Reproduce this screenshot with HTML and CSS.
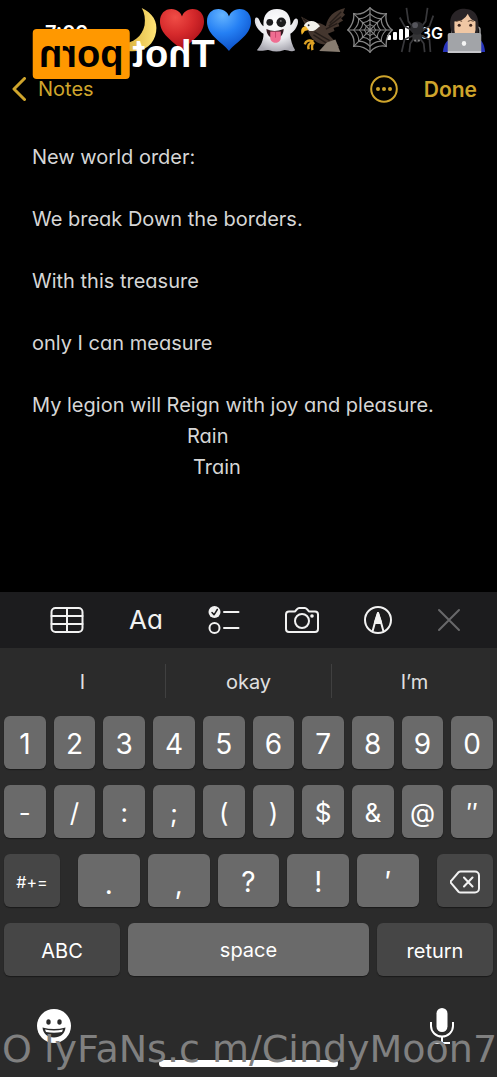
FILE: index.html
```html
<!DOCTYPE html>
<html lang="en">
<head>
<meta charset="utf-8">
<meta name="viewport" content="width=device-width, initial-scale=1">
<title>Notes</title>
<link rel="stylesheet" href="styles.css">
</head>
<body>
<div class="screen">
  <header class="status">
    <span class="time">7:09</span>
    <span class="status-right">
      <svg class="signal" viewBox="0 0 22 14" aria-hidden="true"><rect y="9" width="4" height="5" rx="1"/><rect x="6" y="6" width="4" height="8" rx="1"/><rect x="12" y="3" width="4" height="11" rx="1"/><rect x="18" width="4" height="14" rx="1"/></svg>
      <span class="network">3G</span>
      <svg class="battery" viewBox="0 0 32 14" aria-hidden="true"><rect x="1" y="1" width="28" height="12" rx="3" fill="none" stroke="#999" stroke-width="1.5"/><rect x="3" y="3" width="12" height="8" rx="1" fill="#fff"/></svg>
    </span>
  </header>

  <nav class="nav">
    <a class="back" href="#"><svg class="chevron" viewBox="0 0 14 24" aria-hidden="true"><path d="M12.500 1.500 2 12l10.500 10.500"/></svg>Notes</a>
    <button class="more" type="button" aria-label="More"><svg viewBox="0 0 28 28" aria-hidden="true"><circle cx="14" cy="14" r="12.800" fill="none" stroke="currentColor" stroke-width="2"/><g fill="currentColor"><circle cx="8" cy="14" r="2"/><circle cx="14" cy="14" r="2"/><circle cx="20" cy="14" r="2"/></g></svg></button>
    <button class="done" type="button">Done</button>
  </nav>

  <main class="note">
    <p>New world order:</p>
    <p>We break Down the borders.</p>
    <p>With this treasure</p>
    <p>only I can measure</p>
    <p>My legion will Reign with joy and pleasure.</p>
    <p class="rain">Rain</p>
    <p class="train">Train</p>
  </main>

  <section class="keyboard" aria-label="Keyboard">
    <div class="toolbar">
      <button type="button" aria-label="Table"><svg width="34" height="28" viewBox="0 0 34 28"><rect x="1.500" y="2" width="31" height="24" rx="4"/><path d="M1.500 10h31M1.500 18h31M17 2v24"/></svg></button>
      <button type="button" class="format">Aa</button>
      <button type="button" aria-label="Checklist"><svg width="32" height="28" viewBox="0 0 32 28"><circle cx="6.500" cy="6" r="6" fill="#f2f2f2" stroke="none"/><path d="m4 6.500 2 2.300L9.300 3.500" stroke="#1c1c1e" stroke-width="1.500"/><circle cx="6.500" cy="22" r="5"/><path d="M16 6h14.500M16 22h14.500"/></svg></button>
      <button type="button" aria-label="Camera"><svg width="34" height="28" viewBox="0 0 34 28"><path d="M4 5.500h5.500c1.500 0 2-3.500 4.500-3.500h6c2.500 0 3 3.500 4.500 3.500H30a3 3 0 0 1 3 3V23a3 3 0 0 1-3 3H4a3 3 0 0 1-3-3V8.500a3 3 0 0 1 3-3Z"/><circle cx="17" cy="15" r="7"/><circle cx="27" cy="10" r="1.800" fill="#f2f2f2" stroke="none"/></svg></button>
      <button type="button" aria-label="Markup"><svg width="28" height="28" viewBox="1 0 28 28"><circle cx="15" cy="14" r="13"/><path d="m9.500 25.500 3-11L15 7l2.500 7.500 3 11M12.500 17h5"/><path d="m15 7-2.800 9h5.600Z" fill="#f2f2f2"/></svg></button>
      <button type="button" class="close" aria-label="Close"><svg width="24" height="28" viewBox="0 0 24 28"><path d="m2 4 20 20M22 4 2 24"/></svg></button>
    </div>

    <div class="suggestions">
      <button type="button">I</button><button type="button">okay</button><button type="button">I’m</button>
    </div>

    <div class="keys">
      <div class="row">
        <button type="button">1</button><button type="button">2</button><button type="button">3</button><button type="button">4</button><button type="button">5</button><button type="button">6</button><button type="button">7</button><button type="button">8</button><button type="button">9</button><button type="button">0</button>
      </div>
      <div class="row symbols">
        <button type="button">-</button><button type="button">/</button><button type="button">:</button><button type="button">;</button><button type="button">(</button><button type="button">)</button><button type="button">$</button><button type="button">&amp;</button><button type="button">@</button><button type="button">″</button>
      </div>
      <div class="row punctuation">
        <button type="button" class="dark shift">#+=</button>
        <div class="row middle"><button type="button" class="low">.</button><button type="button" class="low">,</button><button type="button">?</button><button type="button">!</button><button type="button">′</button></div>
        <button type="button" class="dark shift" aria-label="Delete"><svg width="30" height="24" viewBox="0 0 30 24"><path d="M10.500 1.500H25a4 4 0 0 1 4 4v13a4 4 0 0 1-4 4H10.500a3 3 0 0 1-2-.8L1.200 13.200a1.600 1.600 0 0 1 0-2.400l7.300-8.500a3 3 0 0 1 2-.8ZM14 7.500l8.500 9M22.500 7.500l-8.500 9"/></svg></button>
      </div>
      <div class="row bottom">
        <button type="button" class="dark word">ABC</button><button type="button" class="space">space</button><button type="button" class="dark word">return</button>
      </div>
    </div>

    <div class="footer">
      <button type="button" aria-label="Emoji"><svg width="34" height="36" viewBox="0 0 34 36"><circle cx="17" cy="18" r="17" fill="#fff"/><g fill="#2b2b2b"><ellipse cx="11.500" cy="14" rx="2.200" ry="2.800"/><ellipse cx="22.500" cy="14" rx="2.200" ry="2.800"/><path d="M5.500 19.500q11.500 3 23 0c-.5 6.500-5.500 10-11.500 10s-11-3.500-11.500-10Z"/></g><path d="M8 21.500q9 2 18 0l-1 2.500q-8 1.500-16 0Z" fill="#fff"/></svg></button>
      <button type="button" aria-label="Dictate"><svg width="26" height="36" viewBox="0 0 26 36"><rect x="7.500" y="0" width="11" height="24" rx="5.500" fill="#fff"/><path d="M2 14v4a11 10.500 0 0 0 22 0v-4M13 28.500V35M5 35h16" fill="none" stroke="#fff" stroke-width="2"/></svg></button>
    </div>
    <div class="home"></div>
  </section>

  <div class="emoji-strip" aria-hidden="true">
    <svg viewBox="0 0 48 48"><defs><linearGradient id="moon" x1="0" x2="1"><stop offset="0" stop-color="#c99a22"/><stop offset="1" stop-color="#ffe477"/></linearGradient></defs><path d="M31 1c11 5 17 14 15 25-2 14-14 22-29 20C9 45 4 42 1 37c17 4 30-4 33-18 1-7 0-13-3-18Z" fill="url(#moon)"/></svg>
    <svg viewBox="0 0 48 48"><defs><radialGradient id="red" cx=".35" cy=".2" r=".8"><stop offset="0" stop-color="#f04d46"/><stop offset=".5" stop-color="#d62a2c"/><stop offset="1" stop-color="#a90f18"/></radialGradient></defs><path d="M24 46C19 38 1 30 1 15 1 7 6 2 13 2c6 0 10 4 11 8 1-4 5-8 11-8 7 0 12 5 12 13 0 15-18 23-23 31Z" fill="url(#red)"/></svg>
    <svg viewBox="0 0 48 48"><defs><radialGradient id="blue" cx=".35" cy=".15" r=".85"><stop offset="0" stop-color="#64b4ff"/><stop offset=".5" stop-color="#2580f4"/><stop offset="1" stop-color="#0b50c9"/></radialGradient></defs><path d="M24 46C19 38 1 30 1 15 1 7 6 2 13 2c6 0 10 4 11 8 1-4 5-8 11-8 7 0 12 5 12 13 0 15-18 23-23 31Z" fill="url(#blue)"/></svg>
    <svg viewBox="0 0 48 48"><defs><radialGradient id="ghost" cx=".5" cy=".3" r=".7"><stop offset="0" stop-color="#fff"/><stop offset=".6" stop-color="#ebebef"/><stop offset="1" stop-color="#aaa9b2"/></radialGradient></defs><path d="M11 20C10 9 15 2 25 2s15 7 14 17c3-1 3-7 6-7 4 0 2 11-6 16 0 7 2 12 5 17-5 3-8-1-12 0-5 2-10 2-15 0-4-1-7 2-13 0 4-4 7-10 7-17-8-5-11-14-8-17 4-1 4 7 8 9Z" fill="url(#ghost)"/><circle cx="17.500" cy="16" r="3.500" fill="#1c1c1e"/><circle cx="29.500" cy="16" r="5" fill="#1c1c1e"/><circle cx="29" cy="14.500" r="1" fill="#777"/><path d="M14 23q8 4 18 0c0 6-4 10-9 10s-9-4-9-10Z" fill="#33191f"/><path d="M18 25.500h11V32c0 7-11 7-11 0Z" fill="#ef6d91"/><path d="M23.500 26v6" stroke="#cf456e"/></svg>
    <svg viewBox="0 0 48 48"><path d="M1 10l6 3 8 5c4-3 8 0 12 2 2-10 8-16 20-19l-2 5 2 2-4 4 2 2-5 3 1 3-6 2 1 3-7 3c5 5 9 9 12 14l-12-3C19 40 11 34 8 24Z" fill="#44362e"/><path d="m31 17 12-12M30 20 43 10M27 23l12-6M15 26l16 9M14 29l14 9M3 12l9 7" stroke="#251d19" stroke-width="1.500"/><path d="M4 19c4-6 12-6 17 1-3 1-4 6-11 5l-4-3Z" fill="#f2f1eb"/><path d="M6 20c-4 0-6 4-4 9l3-4 4-1Z" fill="#f3b52a"/><circle cx="9" cy="19" r="1" fill="#222"/><path d="M14 36c-5-2-8-1-9 3M13 37c-4 1-5 3-4 7M15 37c-2 1-3 4-2 8" fill="none" stroke="#dda124" stroke-width="2.500"/><path d="m28 37 9-3 5 13-22-1Z" fill="#877c70"/></svg>
    <svg viewBox="0 0 48 48" fill="none" stroke="#858585"><path stroke-width="1.200" d="M24 0v48M0 24h48M7 7l34 34M41 7 7 41"/><path stroke-width="1.400" d="M24 1Q16 9 7 7 8 16 1 24q8 7 6 17 10-1 17 6 7-8 17-6-1-10 6-17-8-7-6-17-9 1-17-6Z"/><path stroke-width="1.100" d="M24 7q-6 6-12 5 1 6-5 12 6 6 5 12 6-1 12 5 6-6 12-5-1-6 5-12-6-6-5-12-6 1-12-5ZM24 13q-4 4-8 3 1 4-3 8 4 4 3 8 4-1 8 3 4-4 8-3-1-4 3-8-4-4-3-8-4 1-8-3ZM24 18q-2 2-4 2 0 2-2 4 2 2 2 4 2 0 4 2 2-2 4-2 0-2 2-4-2-2-2-4-2 0-4-2Z"/></svg>
    <svg viewBox="0 0 48 48"><g fill="none" stroke="#38383b" stroke-width="1.800" stroke-linejoin="round"><path d="m22 24-7-9L13 1M22 26l-11-6-5-9M22 29l-11 5-3 13M22 31l-5 7-1 9M26 24l7-9 2-14M26 26l11-6 4-11M26 29l11 5 1 13M26 31l5 7 1 9"/></g><ellipse cx="24" cy="31" rx="5" ry="6" fill="#333335"/><ellipse cx="24" cy="22" rx="7" ry="7" fill="#29292c"/><ellipse cx="22" cy="19" rx="3" ry="3" fill="#55555b"/><circle cx="22" cy="35" r="1" fill="#888"/><circle cx="26" cy="35" r="1" fill="#888"/></svg>
    <svg viewBox="0 0 48 48"><path d="M11 26C6 9 15 1 26 2c13 1 14 12 13 26l-3 5H13Z" fill="#292427"/><path d="M2 47q1-14 13-15h20q10 1 11 15Z" fill="#2734bd"/><path d="M14 15q10 0 14-8 2 6 8 8v9q-1 11-11 12-11-1-11-12Z" fill="#f0c7a4"/><circle cx="19" cy="19" r="1.600" fill="#402820"/><circle cx="31" cy="19" r="1.600" fill="#402820"/><path d="M16 15q3-2 6 0M28 15q3-2 6 0" stroke="#59402f" fill="none"/><rect x="7" y="27" width="35" height="20" rx="2" fill="#a2a4a8"/><path d="M7 46h35v2H7Z" fill="#c5c6c9"/><ellipse cx="24" cy="38" rx="2.300" ry="2.600" fill="#f5f5f5"/></svg>
  </div>
  <div class="sticker">Thot<span>porn</span></div>
  <div class="watermark">O lyFaNs.c m/CindyMoon7</div>
</div>
</body>
</html>
```
FILE: styles.css
```css
* {
  box-sizing: border-box;
}

body {
  margin: 0;
  background: #000;
  color: #d6d6d6;
  font-family: Inter, "Liberation Sans", sans-serif;
}

button {
  margin: 0;
  padding: 0;
  border: 0;
  background: none;
  color: inherit;
  font: inherit;
}

svg {
  display: block;
}

.screen {
  position: relative;
  display: flex;
  flex-direction: column;
  min-height: 100vh;
  overflow: hidden;
}

.status {
  display: flex;
  justify-content: space-between;
  align-items: center;
  padding: 21px 14px 0 45px;
  color: #fff;
}

.time {
  font-size: 20px;
  font-weight: 600;
  line-height: 24px;
}

.status-right {
  display: flex;
  align-items: center;
  gap: 8px;
}

.signal {
  width: 22px;
  height: 14px;
  fill: #fff;
}

.network {
  padding-left: 4px;
  font-size: 16px;
  font-weight: 600;
  line-height: 24px;
}

.battery {
  width: 32px;
  height: 14px;
}

.nav {
  display: flex;
  align-items: center;
  gap: 26px;
  padding: 28px 20px 0 12px;
  color: #cfa52c;
}

.back {
  display: flex;
  align-items: center;
  gap: 12px;
  margin-right: auto;
  color: inherit;
  font-size: 20px;
  line-height: 32px;
  text-decoration: none;
}

.chevron {
  width: 14px;
  height: 24px;
  fill: none;
  stroke: currentColor;
  stroke-width: 3;
  stroke-linecap: round;
  stroke-linejoin: round;
}

.more svg {
  width: 28px;
  height: 28px;
}

.done {
  font-size: 21px;
  font-weight: 600;
}

.note {
  flex: 1;
  padding: 37px 32px 32px;
  font-size: 20px;
  line-height: 31px;
  font-feature-settings: "cv11";
}

.note p {
  margin: 0 0 31px;
}

.note p:nth-child(n + 5) {
  margin-bottom: 0;
}

.note .rain {
  padding-left: 155px;
}

.note .train {
  padding-left: 161px;
}

.keyboard {
  background: #2b2b2b;
  color: #f2f2f2;
}

.toolbar {
  display: flex;
  justify-content: space-between;
  align-items: center;
  padding: 10px 36px 10px 50px;
  background: #1c1c1e;
}

.toolbar svg {
  fill: none;
  stroke: #f2f2f2;
  stroke-width: 2;
  stroke-linejoin: round;
  stroke-linecap: round;
}

.toolbar .format {
  font-size: 26px;
  line-height: 36px;
  font-feature-settings: "cv11";
}

.toolbar .close svg {
  stroke: #68686a;
}

.suggestions {
  display: flex;
  padding: 16px 0;
}

.suggestions button {
  flex: 1;
  padding-top: 2px;
  font-size: 20px;
  line-height: 32px;
  color: #e0e0e0;
}

.suggestions button + button {
  border-left: 1px solid #404040;
}

.keys {
  display: flex;
  flex-direction: column;
  gap: 16px;
  padding: 2px 4px 0;
}

.row {
  display: flex;
  gap: 8px;
}

.row button {
  flex: 1;
  min-width: 0;
  padding-top: 3px;
  border-radius: 6px;
  background: #6a6a6a;
  box-shadow: 0 1px 1px #1a1a1a;
  color: #fff;
  font-size: 28px;
  line-height: 50px;
}

.symbols button {
  font-size: 26px;
}

.punctuation {
  gap: 18px;
}

.middle {
  flex: 1;
}

.row .low {
  padding-top: 7px;
  line-height: 46px;
}

.row .dark {
  background: #464646;
}

.row .shift {
  flex: 0 0 56px;
  font-size: 16px;
}

.shift svg {
  margin: 0 auto;
  fill: none;
  stroke: #f2f2f2;
  stroke-width: 2;
  stroke-linecap: round;
}

.row .word {
  flex: 0 0 116px;
  font-size: 20px;
}

.row .space {
  padding-top: 0;
  font-size: 20px;
}

.footer {
  display: flex;
  justify-content: space-between;
  padding: 32px 42px 0 37px;
}

.home {
  width: 36%;
  height: 7px;
  margin: 16px auto 10px;
  border-radius: 4px;
  background: #fff;
}

.emoji-strip {
  position: absolute;
  top: 7px;
  right: 10px;
  display: flex;
  gap: 1px;
}

.emoji-strip svg {
  width: 46px;
  height: 46px;
}

.sticker {
  position: absolute;
  top: 29px;
  left: 33px;
  display: flex;
  gap: 3px;
  color: #fff;
  font: bold 38px/50px "Liberation Sans", sans-serif;
  transform: scaleX(-1);
}

.sticker span {
  padding: 0 6px;
  border-radius: 4px;
  background: #ff9800;
  color: #000;
}

.watermark {
  position: absolute;
  bottom: 6px;
  left: 2px;
  color: #808080;
  font: 38px/44px "DejaVu Sans", sans-serif;
  white-space: nowrap;
}
```
